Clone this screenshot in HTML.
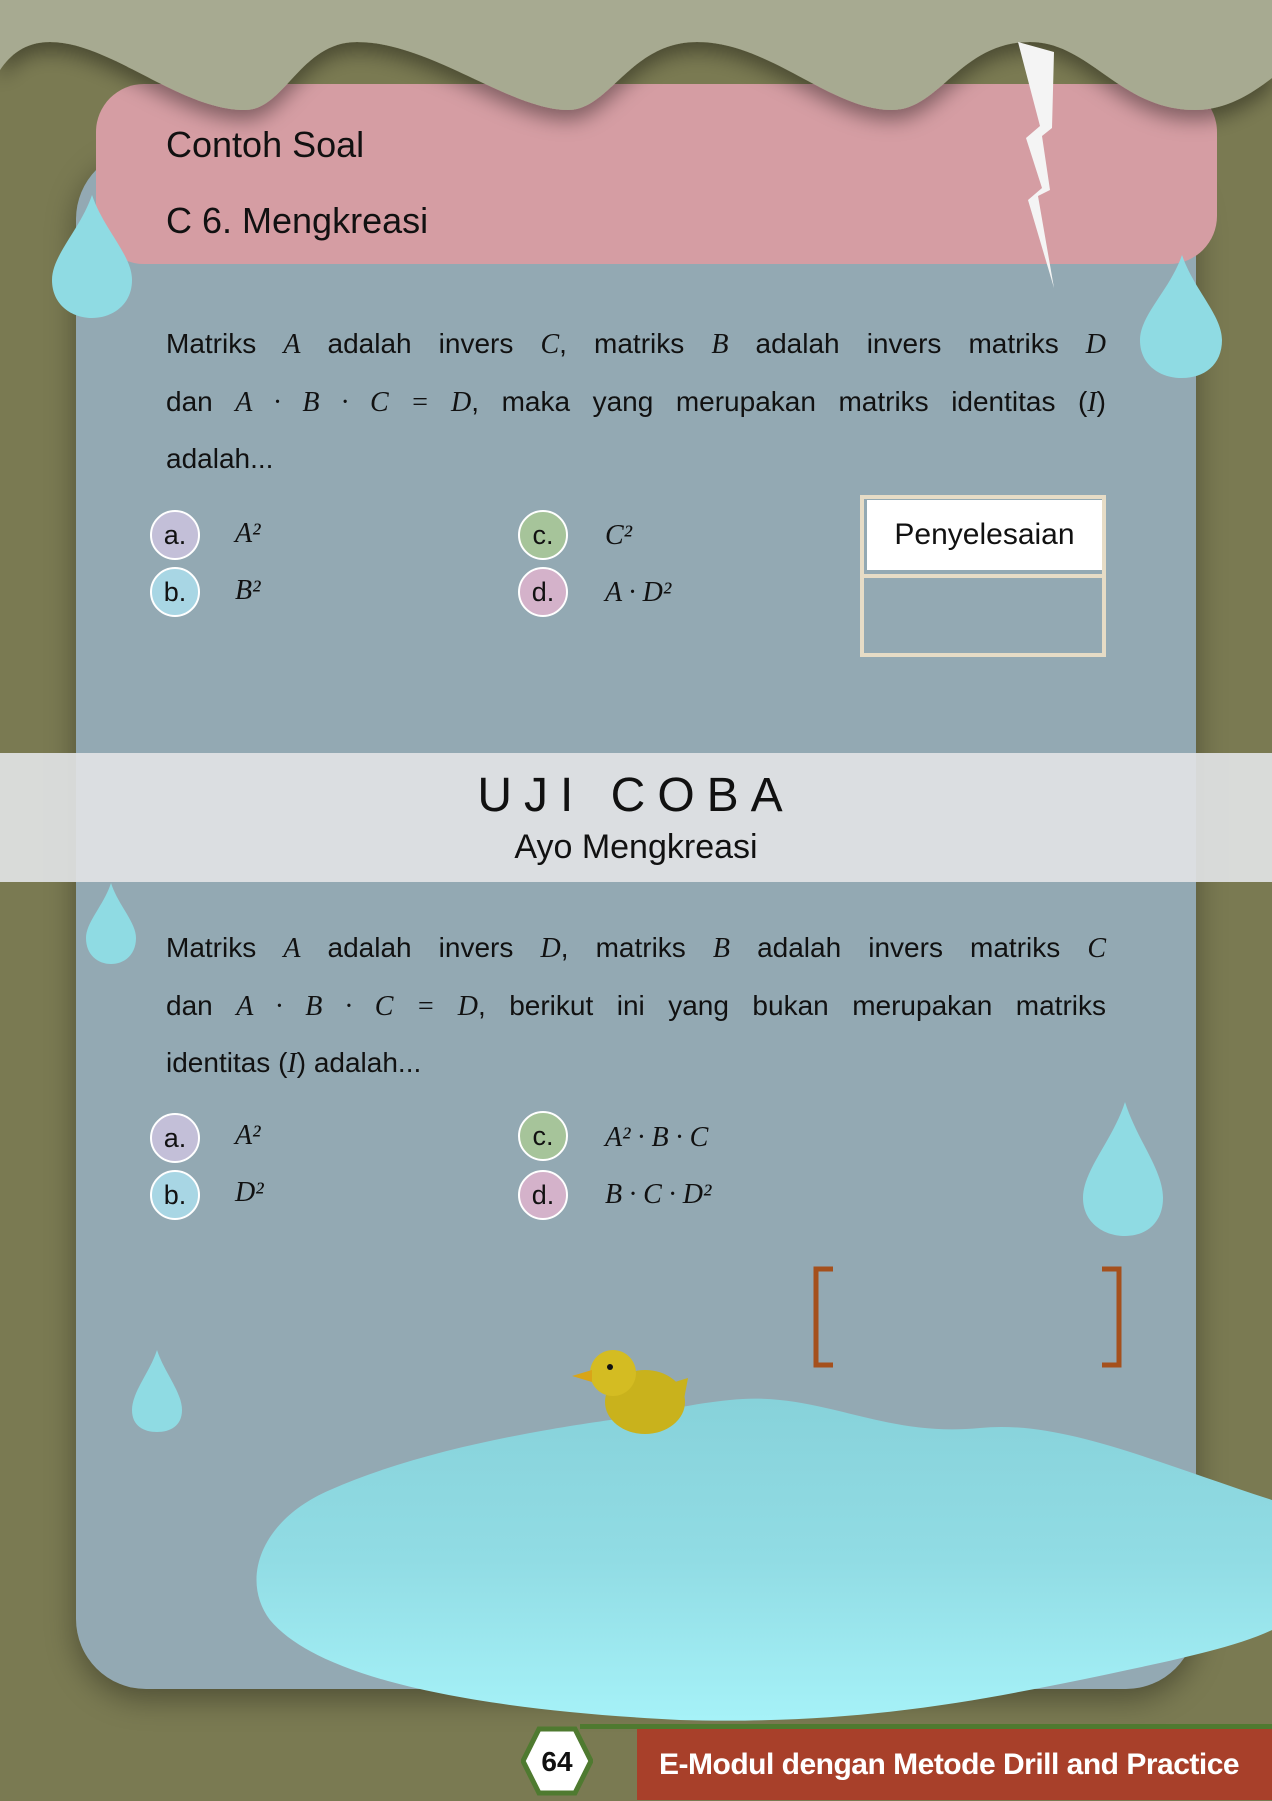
<!DOCTYPE html>
<html><head><meta charset="utf-8"><style>
*{margin:0;padding:0;box-sizing:border-box}
body{width:1272px;height:1800px;overflow:hidden;background:#7a7a52;position:relative;font-family:"Liberation Sans",sans-serif;color:#111}
.abs{position:absolute}
.card{left:76px;top:149px;width:1120px;height:1540px;background:#93a9b3;border-radius:70px;box-shadow:0 10px 30px rgba(0,0,0,.35)}
.pink{left:96px;top:84px;width:1121px;height:180px;background:#d59da3;border-radius:48px}
.h{font-size:36px;left:166px}
.ln{position:absolute;left:166px;width:940px;font-size:28px;text-align:justify;text-align-last:justify;white-space:nowrap}
.ln.l{text-align-last:left}
.m{font-family:"Liberation Serif",serif;font-style:italic}
.opt{position:absolute;font-size:28px}
.c{position:absolute;width:50px;height:50px;border-radius:50%;border:2px solid #fff;text-align:center;line-height:46px;font-size:27px}
.band{left:0;top:753px;width:1272px;height:129px;background:rgba(225,227,229,.92)}
</style></head><body>
<div class="abs card"></div>
<div class="abs pink"></div>
<svg class="abs" style="left:0;top:0" width="1272" height="160"><defs><filter id="s" x="-5%" y="-20%" width="110%" height="160%"><feDropShadow dx="0" dy="10" stdDeviation="10" flood-color="#000" flood-opacity=".4"/></filter></defs>
<path filter="url(#s)" d="M0 0H1272V78C1250 95 1225 110 1195 110C1120 110 1090 42 1030 42C960 42 940 110 892 110C830 110 770 42 697 42C630 42 610 110 568 110C510 110 430 42 357 42C300 42 285 110 245 110C180 110 110 42 50 42C25 42 10 55 0 70Z" fill="#a7aa91"/></svg>
<svg class="abs" style="left:1010px;top:38px" width="70" height="260"><path d="M8 4L44 14L42 90L32 98L40 152L28 158L44 250L18 162L32 150L16 100L30 88Z" fill="#f4f4f4"/></svg>
<div class="abs h" style="top:124px">Contoh Soal</div>
<div class="abs h" style="top:200px">C 6. Mengkreasi</div>
<div class="ln" style="top:328px">Matriks <span class="m">A</span> adalah invers <span class="m">C</span>, matriks <span class="m">B</span> adalah invers matriks <span class="m">D</span></div>
<div class="ln" style="top:386px">dan <span class="m">A · B · C = D</span>, maka yang merupakan matriks identitas (<span class="m">I</span>)</div>
<div class="ln l" style="top:443px">adalah...</div>
<div class="c" style="left:150px;top:510px;background:#c3bfd8">a.</div>
<div class="c" style="left:150px;top:567px;background:#a8d6e4">b.</div>
<div class="c" style="left:518px;top:510px;background:#a6c49a">c.</div>
<div class="c" style="left:518px;top:567px;background:#d4b2ca">d.</div>
<div class="opt m" style="left:235px;top:518px">A²</div>
<div class="opt m" style="left:235px;top:575px">B²</div>
<div class="opt m" style="left:605px;top:520px">C²</div>
<div class="opt m" style="left:605px;top:577px">A · D²</div>
<div class="abs" style="left:860px;top:495px;width:246px;height:162px;border:4px solid #e6dcc6"></div>
<div class="abs" style="left:864px;top:574px;width:238px;height:4px;background:#e6dcc6"></div>
<div class="abs" style="left:867px;top:500px;width:235px;height:70px;background:#fff;font-size:30px;text-align:center;line-height:70px">Penyelesaian</div>
<div class="abs band"></div>
<div class="abs" style="left:0;top:768px;width:1272px;text-align:center;font-size:48px;letter-spacing:12px">UJI COBA</div>
<div class="abs" style="left:0;top:828px;width:1272px;text-align:center;font-size:34px">Ayo Mengkreasi</div>
<div class="ln" style="top:932px">Matriks <span class="m">A</span> adalah invers <span class="m">D</span>, matriks <span class="m">B</span> adalah invers matriks <span class="m">C</span></div>
<div class="ln" style="top:990px">dan <span class="m">A · B · C = D</span>, berikut ini yang bukan merupakan matriks</div>
<div class="ln l" style="top:1047px">identitas (<span class="m">I</span>) adalah...</div>
<div class="c" style="left:150px;top:1113px;background:#c3bfd8">a.</div>
<div class="c" style="left:150px;top:1170px;background:#a8d6e4">b.</div>
<div class="c" style="left:518px;top:1111px;background:#a6c49a">c.</div>
<div class="c" style="left:518px;top:1170px;background:#d4b2ca">d.</div>
<div class="opt m" style="left:235px;top:1120px">A²</div>
<div class="opt m" style="left:235px;top:1177px">D²</div>
<div class="opt m" style="left:605px;top:1122px">A² · B · C</div>
<div class="opt m" style="left:605px;top:1179px">B · C · D²</div>
<svg class="abs" style="left:810px;top:1265px" width="325" height="105"><path d="M23 4H6V100H23M292 4H309V100H292" fill="none" stroke="#a5501c" stroke-width="5"/></svg>
<svg class="abs" style="left:0;top:1380px" width="1272" height="360"><defs><linearGradient id="g" x1="0" y1="0" x2="0" y2="1"><stop offset="0" stop-color="#87d2da"/><stop offset=".5" stop-color="#91dce4"/><stop offset="1" stop-color="#a6f2f8"/></linearGradient></defs><path d="M610 40C540 50 420 70 330 110C260 140 240 200 270 240C320 300 480 330 680 340C860 345 980 320 1080 300C1150 285 1230 270 1272 250V120C1150 80 1060 40 980 48C880 58 820 10 730 20C680 25 650 35 610 40Z" fill="url(#g)"/></svg>
<svg class="abs" style="left:570px;top:1340px" width="120" height="100"><ellipse cx="75" cy="62" rx="40" ry="32" fill="#c9b21c"/><path d="M95 45L118 38L112 70Z" fill="#c9b21c"/><circle cx="43" cy="33" r="23" fill="#d4bc22"/><path d="M22 30L2 36L22 42Z" fill="#d9a518"/><circle cx="40" cy="27" r="3" fill="#111"/></svg>
<svg class="abs" style="left:0;top:0" width="1272" height="1500">
<g fill="#8fdbe3">
<path d="M92 195C80 230 52 255 52 280C52 305 72 318 92 318C112 318 132 305 132 280C132 255 104 230 92 195Z"/>
<path d="M1182 255C1170 290 1140 315 1140 340C1140 365 1160 378 1182 378C1204 378 1222 365 1222 340C1222 315 1194 290 1182 255Z"/>
<path d="M111 883C104 905 86 922 86 938C86 955 98 964 111 964C124 964 136 955 136 938C136 922 118 905 111 883Z"/>
<path d="M1125 1102C1113 1140 1083 1170 1083 1198C1083 1222 1103 1236 1125 1236C1147 1236 1163 1222 1163 1198C1163 1170 1137 1140 1125 1102Z"/>
<path d="M157 1350C150 1372 132 1392 132 1410C132 1426 144 1432 157 1432C170 1432 182 1426 182 1410C182 1392 164 1372 157 1350Z"/>
</g></svg>
<div class="abs" style="left:580px;top:1724px;width:692px;height:5px;background:#4f7a30"></div>
<div class="abs" style="left:637px;top:1729px;width:635px;height:71px;background:#a8402a;color:#fff;font-size:30px;font-weight:bold;line-height:72px;padding-left:22px;white-space:nowrap;letter-spacing:-0.5px">E-Modul dengan Metode Drill and Practice</div>
<svg class="abs" style="left:521px;top:1726px" width="72" height="70"><path d="M18 3H54L70 35L54 67H18L2 35Z" fill="#fff" stroke="#4f7a30" stroke-width="5"/><text x="36" y="45" font-family="Liberation Sans" font-size="28" font-weight="bold" text-anchor="middle" fill="#111">64</text></svg>
</body></html>
